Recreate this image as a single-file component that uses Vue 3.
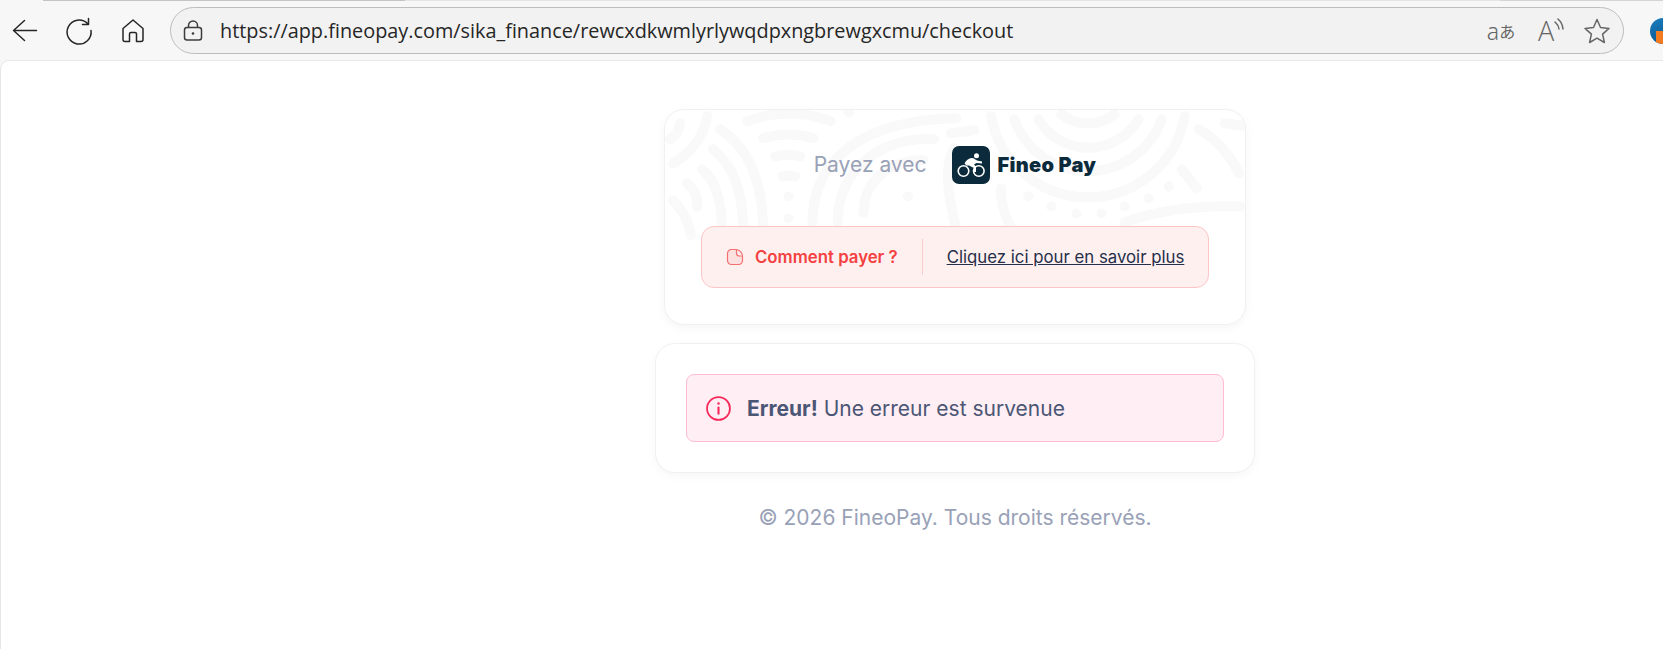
<script setup>
const arcs = [
  'M82 11A120 120 0 0 1 165 11', 'M98 28A90 90 0 0 1 148 28', 'M110 46A60 60 0 0 1 135 46', 'M117 66A40 40 0 0 1 130 66',
  'M123 86h.1', 'M123 108h.1', 'M183 2h.1',
  'M55 19C78 34 98 62 98 125', 'M48 39C68 56 78 78 78 125', 'M37 59C50 70 57 88 57 125', 'M22 73C30 80 33 88 32 96',
  'M42 6C40 22 28 42 8 53', 'M15 13C14 20 10 26 5 29',
  'M147 112C147 50 195 10 290 8', 'M172 112C172 60 215 26 268 29', 'M198 102C198 72 222 50 258 50', 'M242 86h.1',
  'M288 38C276 60 284 90 290 118', 'M285 23L308 20',
  'M325 6A98 98 0 0 0 518 6', 'M348 9A78 78 0 0 0 495 9', 'M372 9A58 58 0 0 0 472 9', 'M395 4A42 42 0 0 0 448 4',
  'M532 19C548 28 563 44 572 63', 'M515 59L530 78', 'M502 76h.1', 'M482 88h.1', 'M458 96h.1', 'M435 103h.1', 'M410 103h.1', 'M385 96h.1', 'M362 86h.1',
  'M335 78C334 92 338 104 345 118', 'M458 112C490 100 530 95 574 96', 'M558 13L578 16', 'M8 90C18 100 24 112 26 125'
]
</script>

<template>
  <div class="screen">
    <div class="strip"></div>
    <header class="toolbar">
      <button class="tool" aria-label="Back">
        <svg viewBox="0 0 32 32" width="32" height="32" fill="none" stroke="#262626" stroke-width="1.5" stroke-linecap="round" stroke-linejoin="round"><path d="M4.500 15.500H27.500M15.500 5.500L4.500 15.500L15.500 25.500"/></svg>
      </button>
      <button class="tool" aria-label="Refresh">
        <svg viewBox="0 0 32 32" width="32" height="32" fill="none" stroke="#262626" stroke-width="1.5" stroke-linecap="round" stroke-linejoin="round"><path d="M24.500 8.500A12 12 0 1 0 28 15.500M25.500 3.500V9.500H19.500"/></svg>
      </button>
      <button class="tool" aria-label="Home">
        <svg viewBox="0 0 32 32" width="32" height="32" fill="none" stroke="#262626" stroke-width="1.5" stroke-linejoin="round"><path d="M16 5L6 13.500V24.500Q6 26.500 8 26.500H12.500V19Q12.500 17.500 14 17.500H18Q19.500 17.500 19.500 19V26.500H24Q26 26.500 26 24.500V13.500Z"/></svg>
      </button>
      <div class="address">
        <svg class="lock" viewBox="0 0 24 24" width="24" height="24" fill="none" stroke="#3c3c3c" stroke-width="1.5"><rect x="3.500" y="8.500" width="17" height="12.500" rx="2.500"/><path d="M7.500 8.500V6.500A4.500 4.500 0 0 1 16.500 6.500V8.500"/><circle cx="12" cy="14.500" r="1.300" fill="#3c3c3c" stroke="none"/></svg>
        <span class="url">https://app.fineopay.com/sika_finance/rewcxdkwmlyrlywqdpxngbrewgxcmu/checkout</span>
        <div class="address-tools">
          <span class="tool-sm translate"><span class="translate-a">a</span>あ</span>
          <span class="tool-sm read">
            <span class="read-a">A</span>
            <svg class="read-waves" viewBox="0 0 10 14" width="10" height="14" fill="none" stroke="#666" stroke-width="1.500" stroke-linecap="round"><path d="M1 4Q4.500 7 5 11M4 1Q8.500 5 9 11"/></svg>
          </span>
          <span class="tool-sm">
            <svg viewBox="0 0 32 32" width="32" height="32" fill="none" stroke="#666" stroke-width="1.500" stroke-linejoin="round"><path d="M16 4.500L19.500 12.500L28 13.400L21.600 19.100L23.400 27.500L16 23.200L8.600 27.500L10.400 19.100L4 13.400L12.500 12.500Z"/></svg>
          </span>
        </div>
      </div>
      <div class="avatar"><span class="avatar-block"></span></div>
    </header>

    <main class="page">
      <div class="column">
        <section class="card card-pay">
          <svg class="pattern" viewBox="0 0 580 215" width="582" height="216" fill="none" stroke="#f9f9f9" stroke-width="10" stroke-linecap="round" aria-hidden="true">
            <path v-for="(d, i) in arcs" :key="i" :d="d" />
          </svg>
          <div class="pay-head">
            <span class="pay-label">Payez avec</span>
            <div class="logo">
              <span class="logo-mark">
                <svg viewBox="0 0 38 38" width="38" height="38" fill="none">
                  <circle cx="11.500" cy="25" r="5.300" stroke="#fff" stroke-width="1.600"/>
                  <circle cx="26.800" cy="25" r="5.300" stroke="#fff" stroke-width="1.600"/>
                  <circle cx="24.500" cy="9.800" r="2.500" fill="#fff"/>
                  <path d="M12.500 17.500C14 14 17 12 21 12L25 14.500L30 15.500V17.500L24.500 17L22 18.500L24 20.500V26H22V22L17 19.500L14.500 19.500Z" fill="#fff"/>
                </svg>
              </span>
              <span class="logo-text">Fineo Pay</span>
            </div>
          </div>
          <div class="how">
            <div class="how-left">
              <svg viewBox="0 0 18 18" width="18" height="18"><path d="M5.500 1.500H10.500C14 2.500 16.500 5 16.500 8.500V12.500A4 4 0 0 1 12.500 16.500H5.500A4 4 0 0 1 1.500 12.500V5.500A4 4 0 0 1 5.500 1.500Z" fill="#fde0e0" stroke="#f2706f" stroke-width="1.200"/><path d="M10.500 1.500V5A3 3 0 0 0 13.500 8H16.500" fill="#fff0f0" stroke="#f2706f" stroke-width="1.200"/></svg>
              <strong>Comment payer ?</strong>
            </div>
            <span class="how-sep"></span>
            <a class="how-link" href="#">Cliquez ici pour en savoir plus</a>
          </div>
        </section>

        <section class="card card-error">
          <div class="alert">
            <svg viewBox="0 0 24 24" width="25" height="25" fill="none" stroke="#f8285a" stroke-width="1.700" stroke-linecap="round"><circle cx="12" cy="12" r="11"/><path d="M12 11V17" stroke-width="2"/><circle cx="12" cy="7.300" r="1.200" fill="#f8285a" stroke="none"/></svg>
            <p><strong>Erreur!</strong> Une erreur est survenue</p>
          </div>
        </section>

        <footer class="copy">© 2026 FineoPay. Tous droits réservés.</footer>
      </div>
    </main>
  </div>
</template>

<style scoped>
.screen {
  width: 1663px;
  height: 649px;
  overflow: hidden;
  display: flex;
  flex-direction: column;
  background: #f7f7f7;
  font-family: Inter, "Liberation Sans", sans-serif;
}
.strip {
  height: 1px;
  flex: none;
  background: linear-gradient(to right, #f7f7f7 43px, #c4c4c4 43px, #c4c4c4 405px, #e4e4e4 405px, #e4e4e4 1500px, #d4d4d4 1500px);
}
.toolbar {
  flex: none;
  height: 59px;
  display: flex;
  align-items: center;
  gap: 22px;
  padding: 0 0 0 9px;
}
.tool {
  flex: none;
  width: 32px;
  height: 32px;
  padding: 0;
  border: 0;
  background: none;
  display: flex;
}
.address {
  flex: none;
  width: 1454px;
  height: 47px;
  margin-left: -1px;
  box-sizing: border-box;
  border: 1.500px solid #bdbdbd;
  border-radius: 24px;
  background: #f2f2f2;
  display: flex;
  align-items: center;
  padding: 0 10px 0 10px;
}
.lock { flex: none; }
.url {
  margin-left: 15px;
  font-family: "Open Sans", "Noto Sans", sans-serif;
  font-size: 19.85px;
  color: #262626;
  white-space: nowrap;
}
.address-tools {
  flex: none;
  margin-left: auto;
  display: flex;
  gap: 16px;
}
.tool-sm {
  flex: none;
  width: 32px;
  height: 32px;
  display: flex;
  align-items: center;
  justify-content: center;
}
.translate {
  font-family: "Noto Sans CJK JP", "Noto Sans", sans-serif;
  font-size: 16px;
  line-height: 32px;
  color: #666;
  white-space: nowrap;
}
.translate-a {
  font-family: "Noto Sans", sans-serif;
  font-size: 23px;
  font-weight: 300;
}
.read {
  align-items: flex-start;
  justify-content: flex-start;
}
.read-a {
  margin-left: 5px;
  font-family: "Open Sans", sans-serif;
  font-size: 27px;
  font-weight: 300;
  line-height: 32px;
  color: #666;
}
.read-waves {
  flex: none;
  margin-top: 3px;
  margin-left: 0;
}
.avatar {
  flex: none;
  width: 26px;
  height: 26px;
  margin-left: 4px;
  border-radius: 50%;
  background: linear-gradient(160deg, #1a7fc0, #0a4f86);
  overflow: hidden;
  display: flex;
  align-items: flex-end;
  justify-content: flex-start;
}
.avatar-block {
  width: 9px;
  height: 13px;
  margin-left: 6px;
  background: #f47a1f;
}
.page {
  flex: 1;
  background: #fff;
  border-top: 1px solid #e7e7e7;
  border-left: 1px solid #e7e7e7;
  border-top-left-radius: 9px;
}
.column {
  width: 600px;
  margin-left: 654px;
  padding-top: 48px;
  display: flex;
  flex-direction: column;
  align-items: center;
}
.card {
  box-sizing: border-box;
  background: #fff;
  border: 1px solid #f1f1f4;
  border-radius: 20px;
  box-shadow: 0 3px 10px rgba(0, 0, 0, 0.04);
}
.card-pay {
  position: relative;
  overflow: hidden;
  width: 582px;
  height: 216px;
  padding: 36px 36px 0;
}
.pattern {
  position: absolute;
  left: 0;
  top: 0;
  -webkit-mask-image: linear-gradient(#000 55%, transparent 78%);
  mask-image: linear-gradient(#000 55%, transparent 78%);
}
.pay-head {
  position: relative;
  display: flex;
  align-items: center;
  justify-content: center;
  gap: 25px;
  height: 38px;
}
.pay-label {
  font-size: 21px;
  line-height: 26px;
  color: #99a1b7;
}
.logo {
  display: flex;
  align-items: center;
  gap: 8px;
}
.logo-mark {
  width: 38px;
  height: 38px;
  border-radius: 7px;
  background: #0b2a3c;
  display: flex;
}
.logo-text {
  font-size: 20px;
  font-weight: 900;
  color: #0b2a3c;
  letter-spacing: 0.3px;
}
.how {
  position: relative;
  margin-top: 42px;
  box-sizing: border-box;
  height: 62px;
  border: 1px solid #fdc5c5;
  border-radius: 13px;
  background: #fff0f0;
  display: flex;
  align-items: center;
  padding: 0 24px;
  white-space: nowrap;
}
.how-left {
  flex: none;
  display: flex;
  align-items: center;
  gap: 11px;
  font-size: 16.8px;
  color: #f44141;
}
.how-left strong { font-weight: 600; }
.how-sep {
  flex: none;
  width: 1px;
  height: 36px;
  margin: 0 24px;
  background: #f9cccc;
}
.how-link {
  flex: none;
  font-size: 16.8px;
  color: #252f4a;
  text-decoration: underline;
}
.card-error {
  width: 600px;
  height: 130px;
  margin-top: 18px;
  padding: 30px 30px 0;
}
.alert {
  box-sizing: border-box;
  height: 68px;
  border: 1px solid #ffbdd0;
  border-radius: 8px;
  background: #ffeef3;
  display: flex;
  align-items: center;
  gap: 16px;
  padding: 0 19px;
}
.alert p {
  margin: 0;
  font-size: 21px;
  color: #4b5675;
}
.alert strong { font-weight: 700; }
.copy {
  margin-top: 32px;
  font-size: 21px;
  color: #99a1b7;
}
</style>
